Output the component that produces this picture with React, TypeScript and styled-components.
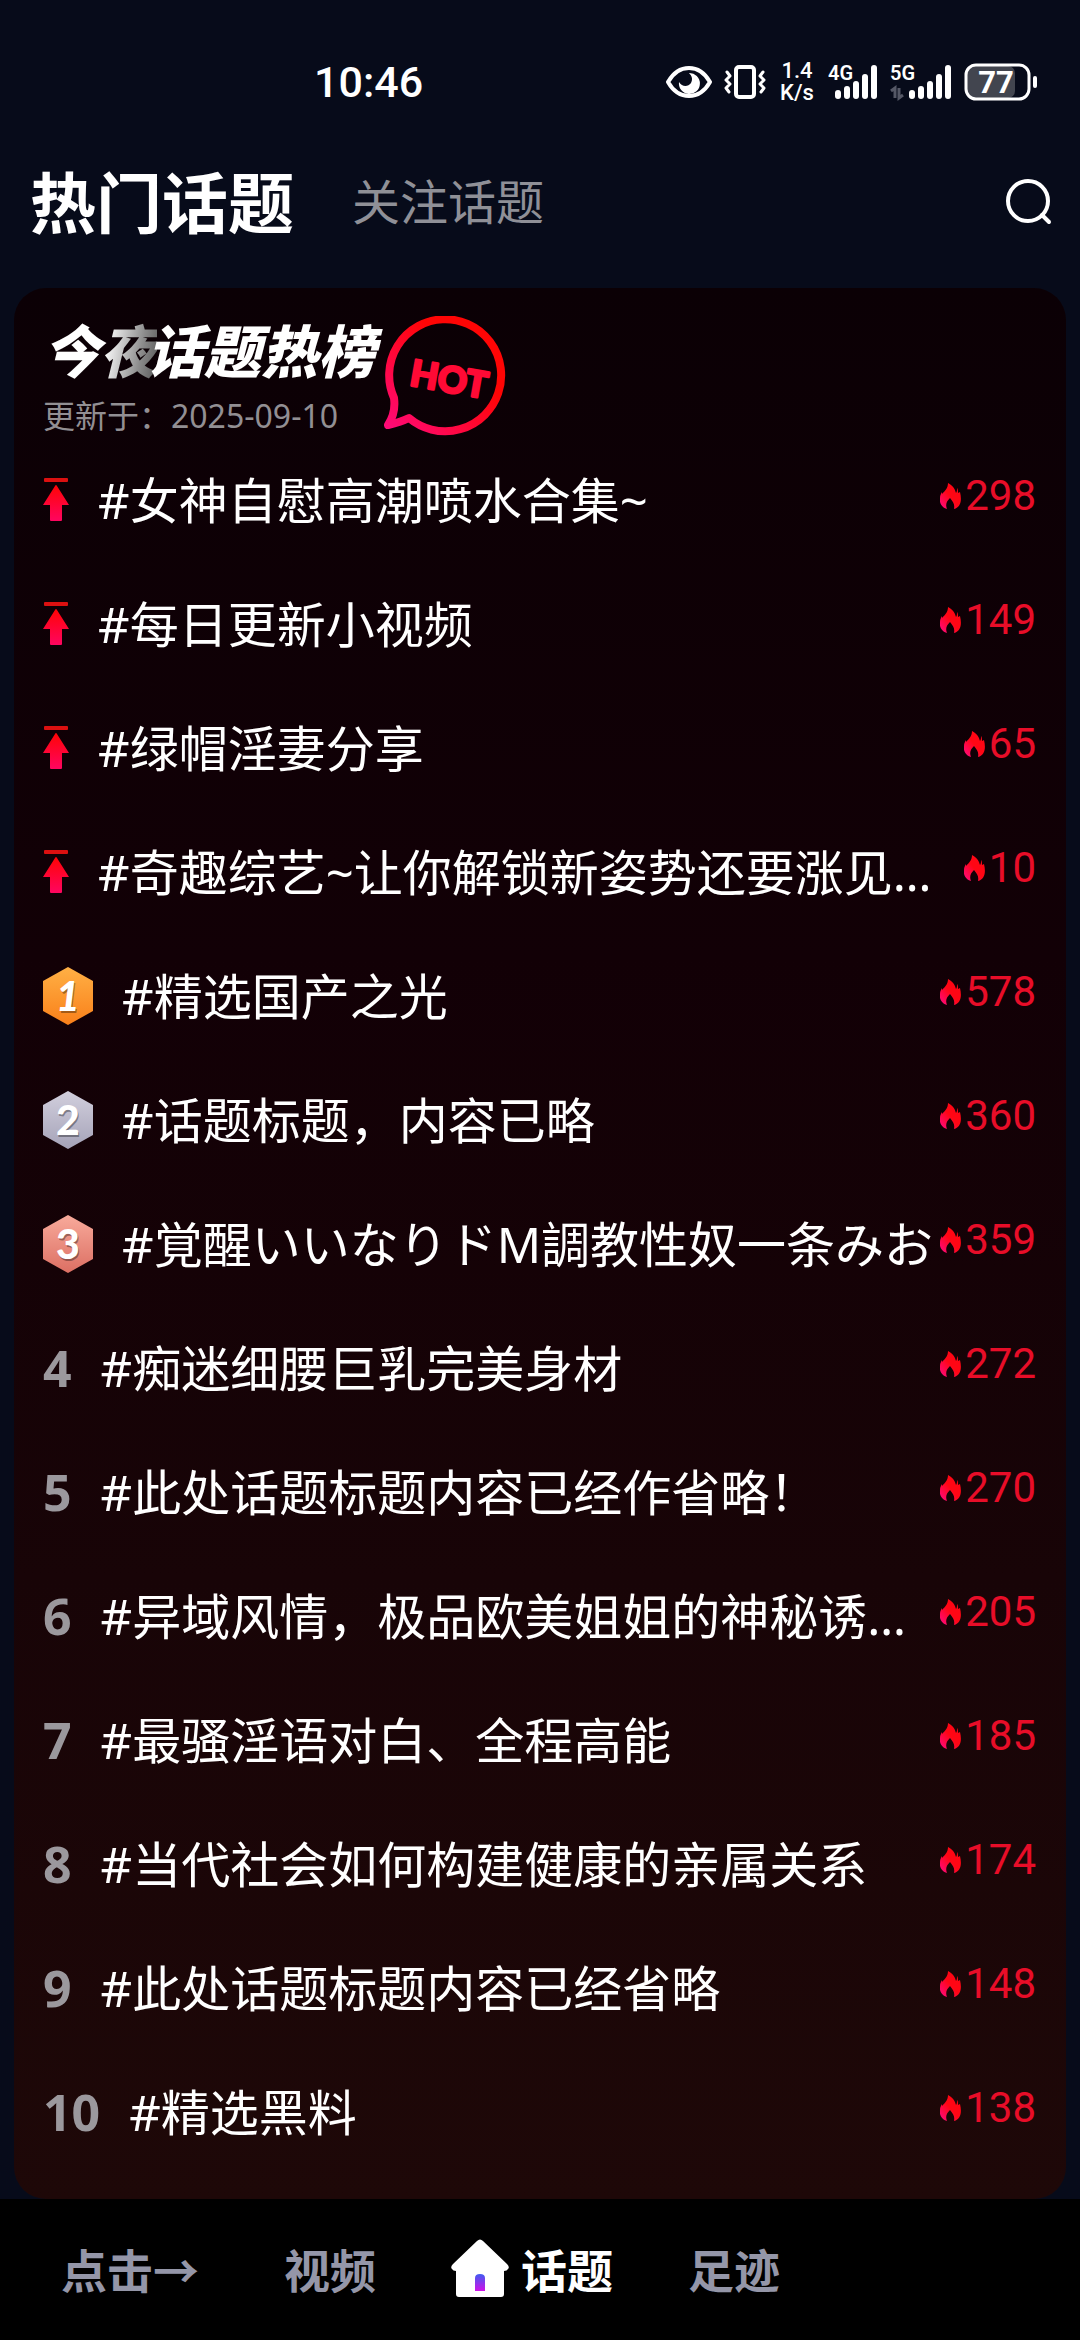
import React from "react";
import styled, { createGlobalStyle } from "styled-components";

const GlobalStyle = createGlobalStyle`
  *, *::before, *::after { box-sizing: border-box; }
  html, body { margin: 0; background: #070b1a; }
  body { font-family: "Noto Sans", "Noto Sans CJK SC", sans-serif; color: #fff; }
  button { margin: 0; padding: 0; border: 0; background: none; color: inherit; font: inherit; cursor: pointer; }
`;

const Screen = styled.div`
  min-height: 100vh;
  display: flex;
  flex-direction: column;
  background: #070b1a;
`;

const StatusBar = styled.header`
  height: 160px;
  padding: 4px 42px 0 314px;
  display: flex;
  align-items: center;
  justify-content: space-between;
  font-family: Roboto, sans-serif;
`;

const Clock = styled.time`
  font-size: 43px;
  line-height: 48px;
  font-weight: 500;
`;

const StatusIcons = styled.div`
  display: flex;
  align-items: center;
  gap: 12px;
`;

const Speed = styled.div`
  width: 38px;
  display: flex;
  flex-direction: column;
  align-items: center;
  font-size: 22px;
  line-height: 22px;
  font-weight: 500;
`;

const Tabs = styled.nav`
  height: 84px;
  padding: 0 25px 0 30px;
  display: flex;
  align-items: center;
`;

const Tab = styled.button<{ $active?: boolean }>`
  margin-right: 58px;
  font-size: ${(p) => (p.$active ? 66 : 48)}px;
  line-height: 84px;
  font-weight: ${(p) => (p.$active ? 700 : 400)};
  color: ${(p) => (p.$active ? "#fff" : "#8f9097")};
`;

const SearchButton = styled.button`
  margin-left: auto;
  width: 52px;
  height: 52px;
  svg { display: block; }
`;

const Card = styled.main`
  margin: 44px 14px 0;
  padding: 0 30px 25px 29px;
  border-radius: 32px;
  background: linear-gradient(#0b0005, #120006 35%, #1e0808);
`;

const CardHead = styled.div`
  height: 150px;
  padding-top: 22px;
  display: flex;
  gap: 8px;
`;

const Title = styled.h1`
  margin: 0;
  display: flex;
  font-family: "Noto Sans CJK SC", sans-serif;
  font-size: 57px;
  line-height: 76px;
  font-weight: 900;
  font-style: italic;
`;

const Faded = styled.span`
  margin-right: -10px;
  background: linear-gradient(100deg, #fff 15%, #8a8a8a 70%, #555);
  background-clip: text;
  color: transparent;
`;

const Updated = styled.p`
  margin: 6px 0 0;
  font-size: 32px;
  line-height: 48px;
  color: #928f93;
`;

const HotBadge = styled.div`
  padding-top: 6px;
  svg { display: block; }
`;

const List = styled.ol`
  margin: 0;
  padding: 0;
  list-style: none;
`;

const Row = styled.li`
  height: 124px;
  display: flex;
  align-items: center;
`;

const Rank = styled.span`
  flex: none;
  margin-right: 29px;
  font-size: 50px;
  line-height: 64px;
  font-weight: 700;
  color: #9b989d;
  svg { display: block; }
`;

const Topic = styled.button`
  flex: 1;
  min-width: 0;
  text-align: left;
  white-space: nowrap;
  font-size: 49px;
  line-height: 72px;
`;

const Heat = styled.span`
  flex: none;
  display: flex;
  align-items: center;
  gap: 4px;
  padding-bottom: 8px;
  font-family: Roboto, sans-serif;
  font-size: 42px;
  line-height: 48px;
  color: #e80d28;
`;

const BottomNav = styled.nav`
  margin-top: auto;
  height: 141px;
  padding: 0 0 4px 61px;
  display: flex;
  align-items: center;
  gap: 75px;
  background: #000;
`;

const NavItem = styled.button<{ $active?: boolean }>`
  display: flex;
  align-items: center;
  gap: 12px;
  font-family: "Noto Sans CJK SC", sans-serif;
  font-size: 46px;
  line-height: 64px;
  font-weight: 700;
  color: ${(p) => (p.$active ? "#fff" : "#9496a8")};
  &:first-child { min-width: 148px; }
`;

const Eye = () => (
  <svg width="46" height="32" viewBox="0 0 46 32" fill="none">
    <path d="M2 16Q10 2 23 2T44 16Q36 30 23 30T2 16Z" stroke="#fff" strokeWidth="4" strokeLinejoin="round" />
    <path d="M23 7A10.500 10.500 0 1 1 13 16c3 5 9 5 12 1 2-4 1-7-2-10Z" fill="#fff" />
  </svg>
);

const Vibrate = () => (
  <svg width="42" height="36" viewBox="0 0 42 36" fill="none" stroke="#fff" strokeWidth="4" strokeLinecap="round" strokeLinejoin="round">
    <rect x="12" y="3" width="18" height="30" rx="3" />
    <path d="M3 8l3 4-4 4 4 4-4 4 3 4M39 8l-3 4 4 4-4 4 4 4-3 4" strokeWidth="3" />
  </svg>
);

function Signal({ label, width, idle }: { label: string; width: number; idle?: boolean }) {
  return (
    <svg width={width} height="38" viewBox={`0 0 ${width} 38`}>
      <text x="0" y="17" fill="#fff" fontFamily="Roboto, sans-serif" fontSize="20" fontWeight="600">{label}</text>
      {idle && (
        <path d="M1 28l4-3v10M9 25v10l4-3" stroke="#555866" strokeWidth="3" fill="none" />
      )}
      {[9, 13, 18, 25, 34].map((h, i) => (
        <rect key={h} x={width - 43 + i * 9} y={36 - h} width="6" height={h} rx="3" fill="#fff" />
      ))}
    </svg>
  );
}

const Battery = () => (
  <svg width="74" height="38" viewBox="0 0 74 38">
    <rect x="3" y="3" width="48" height="32" rx="7" fill="#42454f" />
    <rect x="2" y="2" width="63" height="34" rx="10" fill="none" stroke="#fff" strokeWidth="3" />
    <rect x="69" y="13" width="4" height="12" rx="2" fill="#fff" />
    <text x="32" y="30" textAnchor="middle" fill="#fff" fontFamily="Roboto, sans-serif" fontSize="31" fontWeight="700">77</text>
  </svg>
);

const Search = () => (
  <svg width="52" height="52" viewBox="0 0 52 52" fill="none" stroke="#fff" strokeWidth="4" strokeLinecap="round">
    <circle cx="25" cy="25" r="20" />
    <path d="M39 39l7 7" />
  </svg>
);

const Hot = () => (
  <svg width="128" height="124" viewBox="0 0 128 124" fill="none">
    <defs>
      <linearGradient id="hot" x1="0" y1="1" x2="1" y2="0">
        <stop offset="0" stopColor="#ff0a7a" />
        <stop offset=".65" stopColor="#ff0505" />
      </linearGradient>
    </defs>
    <path
      d="M11 82A56 56 0 1 1 26 102Q18 106 5 109Q13 97 11 82Z"
      stroke="url(#hot)" strokeWidth="8" strokeLinejoin="round"
    />
    <text
      x="66" y="76" textAnchor="middle" transform="rotate(10 66 64)"
      fontFamily="Lato, sans-serif" fontSize="36" fontWeight="700"
      fill="#ff0a35" stroke="#ff0a35" strokeWidth="3" strokeLinejoin="round"
    >HOT</text>
  </svg>
);

const Defs = () => (
  <svg width="0" height="0" style={{ display: "block" }} aria-hidden="true">
    <defs>
      <linearGradient id="red" x1="0" y1="0" x2="0" y2="1">
        <stop offset="0" stopColor="#ff0404" />
        <stop offset="1" stopColor="#ff0560" />
      </linearGradient>
      <linearGradient id="flame" x1="1" y1="0" x2="0" y2="1">
        <stop offset=".5" stopColor="#ff0614" />
        <stop offset="1" stopColor="#ff0a88" />
      </linearGradient>
    </defs>
  </svg>
);

const Pin = () => (
  <svg width="26" height="44" viewBox="0 0 26 44">
    <rect x="1" y="0" width="24" height="4" rx="1" fill="#dc1010" />
    <path d="M12 8q1-2 2 0l12 19H19v15q0 1-1 1H8q-1 0-1-1V27H0Z" fill="url(#red)" />
  </svg>
);

const Flame = () => (
  <svg width="21" height="27" viewBox="0 0 21 27">
    <path d="M8 0c6 3 7 7 8 10 1-1 1-3 1-5 1 1 1 3 1 5l2-1c2 8 1 15-6 17 1-5-1-7-4-11-3 3-5 6-3 11-5-1-8-6-7-11 0-3 1-4 2-6v2C5 8 8 5 8 0Z" fill="url(#flame)" />
  </svg>
);

const MEDALS = [
  ["#ffb045", "#f9801a"],
  ["#d2cfdd", "#a5a3b8"],
  ["#f8aa9b", "#dc6f63"],
];

function Medal({ place }: { place: number }) {
  const [top, bottom] = MEDALS[place - 1];
  const id = `medal${place}`;
  return (
    <svg width="50" height="58" viewBox="0 0 50 58">
      <defs>
        <linearGradient id={id} x1="0" y1="0" x2="0" y2="1">
          <stop offset="0" stopColor={top} />
          <stop offset="1" stopColor={bottom} />
        </linearGradient>
      </defs>
      <path d="M25 0L50 14V44L25 58L0 44V14Z" fill={`url(#${id})`} />
      <g
        fontFamily="Lato, sans-serif" fontSize="41" fontWeight="900"
        fontStyle={place === 1 ? "italic" : "normal"} textAnchor="middle"
      >
        <text x="26" y="46" fill="#000" fillOpacity=".35">{place}</text>
        <text x="25" y="44" fill="#fff">{place}</text>
      </g>
    </svg>
  );
}

const House = () => (
  <svg width="58" height="58" viewBox="0 0 58 58">
    <defs>
      <linearGradient id="door" x1="0" y1="0" x2="0" y2="1">
        <stop offset="0" stopColor="#415cf0" />
        <stop offset="1" stopColor="#d010e8" />
      </linearGradient>
    </defs>
    <path d="M26 2q3-3 6 0l24 23q3 3 1 5-1 2-4 2v23q0 3-3 3H8q-3 0-3-3V32q-3 0-4-2-2-2 1-5Z" fill="#fff" />
    <path d="M24 52V39q0-4 5-4t5 4v13Z" fill="url(#door)" />
  </svg>
);

type Item = { rank: number; title: string; heat: number };

const ITEMS: Item[] = [
  { rank: 0, title: "#女神自慰高潮喷水合集~", heat: 298 },
  { rank: 0, title: "#每日更新小视频", heat: 149 },
  { rank: 0, title: "#绿帽淫妻分享", heat: 65 },
  { rank: 0, title: "#奇趣综艺~让你解锁新姿势还要涨见…", heat: 10 },
  { rank: 1, title: "#精选国产之光", heat: 578 },
  { rank: 2, title: "#话题标题，内容已略", heat: 360 },
  { rank: 3, title: "#覚醒いいなりドM調教性奴一条みお", heat: 359 },
  { rank: 4, title: "#痴迷细腰巨乳完美身材", heat: 272 },
  { rank: 5, title: "#此处话题标题内容已经作省略！", heat: 270 },
  { rank: 6, title: "#异域风情，极品欧美姐姐的神秘诱…", heat: 205 },
  { rank: 7, title: "#最骚淫语对白、全程高能", heat: 185 },
  { rank: 8, title: "#当代社会如何构建健康的亲属关系", heat: 174 },
  { rank: 9, title: "#此处话题标题内容已经省略", heat: 148 },
  { rank: 10, title: "#精选黑料", heat: 138 },
];

function RankMark({ rank }: { rank: number }) {
  if (rank === 0) return <Pin />;
  if (rank <= 3) return <Medal place={rank} />;
  return <>{rank}</>;
}

export default function App() {
  return (
    <Screen>
      <GlobalStyle />
      <Defs />
      <StatusBar>
        <Clock>10:46</Clock>
        <StatusIcons>
          <Eye />
          <Vibrate />
          <Speed><span>1.4</span><span>K/s</span></Speed>
          <Signal label="4G" width={50} />
          <Signal label="5G" width={62} idle />
          <Battery />
        </StatusIcons>
      </StatusBar>
      <Tabs>
        <Tab $active>热门话题</Tab>
        <Tab>关注话题</Tab>
        <SearchButton aria-label="搜索"><Search /></SearchButton>
      </Tabs>
      <Card>
        <CardHead>
          <div>
            <Title>今<Faded>夜</Faded>话题热榜</Title>
            <Updated>更新于：2025-09-10</Updated>
          </div>
          <HotBadge><Hot /></HotBadge>
        </CardHead>
        <List>
          {ITEMS.map((item) => (
            <Row key={item.title}>
              <Rank><RankMark rank={item.rank} /></Rank>
              <Topic>{item.title}</Topic>
              <Heat><Flame />{item.heat}</Heat>
            </Row>
          ))}
        </List>
      </Card>
      <BottomNav>
        <NavItem>点击→</NavItem>
        <NavItem>视频</NavItem>
        <NavItem $active><House />话题</NavItem>
        <NavItem>足迹</NavItem>
      </BottomNav>
    </Screen>
  );
}
